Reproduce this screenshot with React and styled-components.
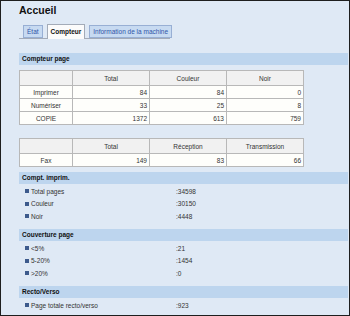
import React from 'react';
import styled, { createGlobalStyle } from 'styled-components';

const Global = createGlobalStyle`
  html, body { margin: 0; padding: 0; background: #fff; }
  body { font-family: "Liberation Sans", Arial, sans-serif; }
`;

const Frame = styled.div`
  box-sizing: border-box;
  width: 350px;
  height: 316px;
  border: 1px solid #1e1e1e;
  background: #dfe9f5;
  padding: 0 1px 0 18px;
  overflow: hidden;
`;

const Title = styled.h1`
  margin: 0;
  padding-top: 3px;
  font-size: 10.5px;
  line-height: 13px;
  font-weight: bold;
  color: #111;
`;

const Tabs = styled.div`
  display: flex;
  align-items: flex-end;
  gap: 4px;
  width: 147px;
  height: 14px;
  margin-top: 7px;
  padding-left: 4px;
  border-bottom: 1px solid #a3abb8;
`;

const Tab = styled.div`
  box-sizing: border-box;
  height: ${p => (p.$active ? '15px' : '13px')};
  margin-bottom: ${p => (p.$active ? '-1px' : '0')};
  padding: 0 3px;
  font-size: 6.5px;
  line-height: ${p => (p.$active ? '14px' : '11px')};
  white-space: nowrap;
  border: 1px solid ${p => (p.$active ? '#a3abb8' : '#98afd4')};
  border-bottom: ${p => (p.$active ? 'none' : '1px solid #98afd4')};
  background: ${p => (p.$active ? '#fbfbfb' : '#c7daf1')};
  color: ${p => (p.$active ? '#111' : '#2f55a8')};
  font-weight: ${p => (p.$active ? 'bold' : 'normal')};
`;

const Section = styled.section`
  margin-top: ${p => p.$mt};
`;

const Bar = styled.div`
  height: 12px;
  line-height: 12px;
  padding-left: 3px;
  background: #bdd5ee;
  font-size: 6.5px;
  font-weight: bold;
  color: #111;
`;

const Table = styled.table`
  border-collapse: collapse;
  table-layout: fixed;
  width: 284px;
  margin-top: ${p => p.$mt};
  border: 1px solid #9c9c9c;
  font-size: 6.5px;
  color: #333;
`;

const Th = styled.th`
  height: 14px;
  padding: 0;
  font-weight: normal;
  text-align: center;
  background: #f1f1f1;
  border: 1px solid #b8b8b8;
`;

const Td = styled.td`
  height: 12px;
  padding: 0 2px;
  text-align: ${p => (p.$num ? 'right' : 'center')};
  background: #fefefb;
  border: 1px solid #b8b8b8;
`;

const List = styled.div`
  padding-top: 1px;
`;

const Row = styled.div`
  display: grid;
  grid-template-columns: 157px 1fr;
  align-items: center;
  height: 12.5px;
  font-size: 6.5px;
  color: #333;
`;

const Label = styled.span`
  display: flex;
  align-items: center;
  padding-left: 6px;
  &::before {
    content: '';
    width: 4px;
    height: 4px;
    margin-right: 2px;
    background: #3d5a8c;
  }
`;

const Value = styled.span``;

const cols = ['53px', '77px', '77px', '77px'];

function DataTable({ mt, head, rows }) {
  return (
    <Table $mt={mt}>
      <colgroup>
        {cols.map((w, i) => (
          <col key={i} style={{ width: w }} />
        ))}
      </colgroup>
      <thead>
        <tr>
          <Th />
          {head.map(h => (
            <Th key={h}>{h}</Th>
          ))}
        </tr>
      </thead>
      <tbody>
        {rows.map(r => (
          <tr key={r[0]}>
            <Td>{r[0]}</Td>
            {r.slice(1).map((v, i) => (
              <Td $num key={i}>{v}</Td>
            ))}
          </tr>
        ))}
      </tbody>
    </Table>
  );
}

function ListSection({ mt, title, items }) {
  return (
    <Section $mt={mt}>
      <Bar>{title}</Bar>
      <List>
        {items.map(([l, v]) => (
          <Row key={l}>
            <Label>{l}</Label>
            <Value>:{v}</Value>
          </Row>
        ))}
      </List>
    </Section>
  );
}

export default function App() {
  return (
    <>
      <Global />
      <Frame>
        <Title>Accueil</Title>
        <Tabs>
          <Tab>État</Tab>
          <Tab $active>Compteur</Tab>
          <Tab>Information de la machine</Tab>
        </Tabs>
        <Section $mt="14px">
          <Bar>Compteur page</Bar>
          <DataTable
            mt="5px"
            head={['Total', 'Couleur', 'Noir']}
            rows={[
              ['Imprimer', '84', '84', '0'],
              ['Numériser', '33', '25', '8'],
              ['COPIE', '1372', '613', '759'],
            ]}
          />
          <DataTable
            mt="13px"
            head={['Total', 'Réception', 'Transmission']}
            rows={[['Fax', '149', '83', '66']]}
          />
        </Section>
        <ListSection
          mt="5px"
          title="Compt. imprim."
          items={[
            ['Total pages', '34598'],
            ['Couleur', '30150'],
            ['Noir', '4448'],
          ]}
        />
        <ListSection
          mt="6.5px"
          title="Couverture page"
          items={[
            ['<5%', '21'],
            ['5-20%', '1454'],
            ['>20%', '0'],
          ]}
        />
        <ListSection
          mt="6.5px"
          title="Recto/Verso"
          items={[['Page totale recto/verso', '923']]}
        />
      </Frame>
    </>
  );
}
